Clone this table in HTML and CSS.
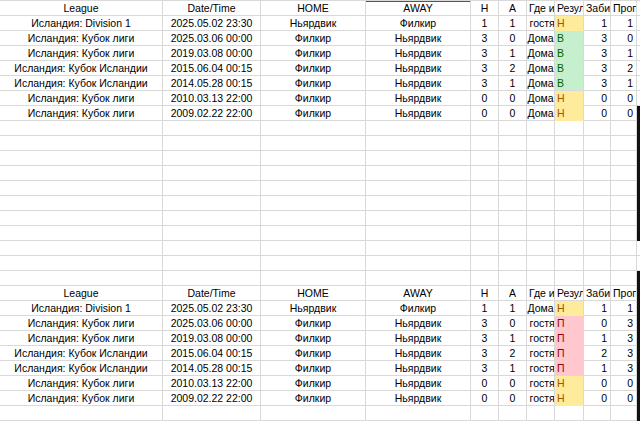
FILE: index.html
```html
<!DOCTYPE html>
<html lang="ru">
<head>
<meta charset="utf-8">
<title>Sheet</title>
<link rel="stylesheet" href="styles.css">
</head>
<body>
<div class="sheet">
  <div class="row hdr"><i class="c"><b>League</b></i><i class="c"><b>Date/Time</b></i><i class="c"><b>HOME</b></i><i class="c sel"><b>AWAY</b></i><i class="c"><b>Н</b></i><i class="c"><b>А</b></i><i class="l"><b>Где играли</b></i><i class="l"><b>Результат</b></i><i class="l"><b>Забито</b></i><i class="l"><b>Пропущено</b></i><i class="e"></i></div>
  <div class="row"><i class="c"><b>Исландия: Division 1</b></i><i class="c"><b>2025.05.02 23:30</b></i><i class="c"><b>Ньярдвик</b></i><i class="c"><b>Филкир</b></i><i class="c"><b>1</b></i><i class="c"><b>1</b></i><i class="c"><b>в гостях</b></i><i class="l draw"><b>Н</b></i><i class="r"><b>1</b></i><i class="r"><b>1</b></i><i class="e"></i></div>
  <div class="row"><i class="c"><b>Исландия: Кубок лиги</b></i><i class="c"><b>2025.03.06 00:00</b></i><i class="c"><b>Филкир</b></i><i class="c"><b>Ньярдвик</b></i><i class="c"><b>3</b></i><i class="c"><b>0</b></i><i class="c"><b>Дома</b></i><i class="l win"><b>В</b></i><i class="r"><b>3</b></i><i class="r"><b>0</b></i><i class="e"></i></div>
  <div class="row"><i class="c"><b>Исландия: Кубок лиги</b></i><i class="c"><b>2019.03.08 00:00</b></i><i class="c"><b>Филкир</b></i><i class="c"><b>Ньярдвик</b></i><i class="c"><b>3</b></i><i class="c"><b>1</b></i><i class="c"><b>Дома</b></i><i class="l win"><b>В</b></i><i class="r"><b>3</b></i><i class="r"><b>1</b></i><i class="e"></i></div>
  <div class="row"><i class="c"><b>Исландия: Кубок Исландии</b></i><i class="c"><b>2015.06.04 00:15</b></i><i class="c"><b>Филкир</b></i><i class="c"><b>Ньярдвик</b></i><i class="c"><b>3</b></i><i class="c"><b>2</b></i><i class="c"><b>Дома</b></i><i class="l win"><b>В</b></i><i class="r"><b>3</b></i><i class="r"><b>2</b></i><i class="e"></i></div>
  <div class="row"><i class="c"><b>Исландия: Кубок Исландии</b></i><i class="c"><b>2014.05.28 00:15</b></i><i class="c"><b>Филкир</b></i><i class="c"><b>Ньярдвик</b></i><i class="c"><b>3</b></i><i class="c"><b>1</b></i><i class="c"><b>Дома</b></i><i class="l win last"><b>В</b></i><i class="r"><b>3</b></i><i class="r"><b>1</b></i><i class="e"></i></div>
  <div class="row"><i class="c"><b>Исландия: Кубок лиги</b></i><i class="c"><b>2010.03.13 22:00</b></i><i class="c"><b>Филкир</b></i><i class="c"><b>Ньярдвик</b></i><i class="c"><b>0</b></i><i class="c"><b>0</b></i><i class="c"><b>Дома</b></i><i class="l draw"><b>Н</b></i><i class="r"><b>0</b></i><i class="r"><b>0</b></i><i class="e"></i></div>
  <div class="row"><i class="c"><b>Исландия: Кубок лиги</b></i><i class="c"><b>2009.02.22 22:00</b></i><i class="c"><b>Филкир</b></i><i class="c"><b>Ньярдвик</b></i><i class="c"><b>0</b></i><i class="c"><b>0</b></i><i class="c"><b>Дома</b></i><i class="l draw"><b>Н</b></i><i class="r"><b>0</b></i><i class="r"><b>0</b></i><i class="e dark"></i></div>
  <div class="row"><i></i><i></i><i></i><i></i><i></i><i></i><i></i><i></i><i></i><i></i><i class="e dark"></i></div>
  <div class="row"><i></i><i></i><i></i><i></i><i></i><i></i><i></i><i></i><i></i><i></i><i class="e dark"></i></div>
  <div class="row"><i></i><i></i><i></i><i></i><i></i><i></i><i></i><i></i><i></i><i></i><i class="e dark"></i></div>
  <div class="row"><i></i><i></i><i></i><i></i><i></i><i></i><i></i><i></i><i></i><i></i><i class="e dark"></i></div>
  <div class="row"><i></i><i></i><i></i><i></i><i></i><i></i><i></i><i></i><i></i><i></i><i class="e dark"></i></div>
  <div class="row"><i></i><i></i><i></i><i></i><i></i><i></i><i></i><i></i><i></i><i></i><i class="e dark"></i></div>
  <div class="row"><i></i><i></i><i></i><i></i><i></i><i></i><i></i><i></i><i></i><i></i><i class="e dark"></i></div>
  <div class="row"><i></i><i></i><i></i><i></i><i></i><i></i><i></i><i></i><i></i><i></i><i class="e dark"></i></div>
  <div class="row"><i></i><i></i><i></i><i></i><i></i><i></i><i></i><i></i><i></i><i></i><i class="e"></i></div>
  <div class="row"><i></i><i></i><i></i><i></i><i></i><i></i><i></i><i></i><i></i><i></i><i class="e"></i></div>
  <div class="row"><i></i><i></i><i></i><i></i><i></i><i></i><i></i><i></i><i></i><i></i><i class="e dark"></i></div>
  <div class="row hdr"><i class="c"><b>League</b></i><i class="c"><b>Date/Time</b></i><i class="c"><b>HOME</b></i><i class="c"><b>AWAY</b></i><i class="c"><b>Н</b></i><i class="c"><b>А</b></i><i class="l"><b>Где играли</b></i><i class="l"><b>Результат</b></i><i class="l"><b>Забито</b></i><i class="l"><b>Пропущено</b></i><i class="e dark"></i></div>
  <div class="row"><i class="c"><b>Исландия: Division 1</b></i><i class="c"><b>2025.05.02 23:30</b></i><i class="c"><b>Ньярдвик</b></i><i class="c"><b>Филкир</b></i><i class="c"><b>1</b></i><i class="c"><b>1</b></i><i class="c"><b>Дома</b></i><i class="l draw"><b>Н</b></i><i class="r"><b>1</b></i><i class="r"><b>1</b></i><i class="e dark"></i></div>
  <div class="row"><i class="c"><b>Исландия: Кубок лиги</b></i><i class="c"><b>2025.03.06 00:00</b></i><i class="c"><b>Филкир</b></i><i class="c"><b>Ньярдвик</b></i><i class="c"><b>3</b></i><i class="c"><b>0</b></i><i class="c"><b>в гостях</b></i><i class="l loss"><b>П</b></i><i class="r"><b>0</b></i><i class="r"><b>3</b></i><i class="e dark"></i></div>
  <div class="row"><i class="c"><b>Исландия: Кубок лиги</b></i><i class="c"><b>2019.03.08 00:00</b></i><i class="c"><b>Филкир</b></i><i class="c"><b>Ньярдвик</b></i><i class="c"><b>3</b></i><i class="c"><b>1</b></i><i class="c"><b>в гостях</b></i><i class="l loss"><b>П</b></i><i class="r"><b>1</b></i><i class="r"><b>3</b></i><i class="e dark"></i></div>
  <div class="row"><i class="c"><b>Исландия: Кубок Исландии</b></i><i class="c"><b>2015.06.04 00:15</b></i><i class="c"><b>Филкир</b></i><i class="c"><b>Ньярдвик</b></i><i class="c"><b>3</b></i><i class="c"><b>2</b></i><i class="c"><b>в гостях</b></i><i class="l loss"><b>П</b></i><i class="r"><b>2</b></i><i class="r"><b>3</b></i><i class="e dark"></i></div>
  <div class="row"><i class="c"><b>Исландия: Кубок Исландии</b></i><i class="c"><b>2014.05.28 00:15</b></i><i class="c"><b>Филкир</b></i><i class="c"><b>Ньярдвик</b></i><i class="c"><b>3</b></i><i class="c"><b>1</b></i><i class="c"><b>в гостях</b></i><i class="l loss last"><b>П</b></i><i class="r"><b>1</b></i><i class="r"><b>3</b></i><i class="e dark"></i></div>
  <div class="row"><i class="c"><b>Исландия: Кубок лиги</b></i><i class="c"><b>2010.03.13 22:00</b></i><i class="c"><b>Филкир</b></i><i class="c"><b>Ньярдвик</b></i><i class="c"><b>0</b></i><i class="c"><b>0</b></i><i class="c"><b>в гостях</b></i><i class="l draw"><b>Н</b></i><i class="r"><b>0</b></i><i class="r"><b>0</b></i><i class="e dark"></i></div>
  <div class="row"><i class="c"><b>Исландия: Кубок лиги</b></i><i class="c"><b>2009.02.22 22:00</b></i><i class="c"><b>Филкир</b></i><i class="c"><b>Ньярдвик</b></i><i class="c"><b>0</b></i><i class="c"><b>0</b></i><i class="c"><b>в гостях</b></i><i class="l draw"><b>Н</b></i><i class="r"><b>0</b></i><i class="r"><b>0</b></i><i class="e dark"></i></div>
  <div class="row"><i></i><i></i><i></i><i></i><i></i><i></i><i></i><i></i><i></i><i></i><i class="e dark"></i></div>
  <div class="row"><i></i><i></i><i></i><i></i><i></i><i></i><i></i><i></i><i></i><i></i><i class="e dark"></i></div>
</div>
</body>
</html>
```
FILE: styles.css
```css
html, body {
  margin: 0;
  padding: 0;
  background: #ffffff;
  overflow: hidden;
}
.sheet {
  width: 640px;
  height: 421px;
  overflow: hidden;
  border-top: 1px solid #d9d9d9;
  font-family: "Liberation Sans", Arial, sans-serif;
  font-size: 10.5px;
  color: #000;
}
.row {
  display: grid;
  grid-template-columns: 163px 98px 105px 105px 28px 28px 28px 29px 27px 26px 3px;
  height: 15px;
}
.row i {
  font-style: normal;
  display: flex;
  align-items: flex-end;
  box-sizing: border-box;
  height: 15px;
  border-right: 1px solid #d9d9d9;
  border-bottom: 1px solid #d9d9d9;
  overflow: hidden;
  white-space: nowrap;
  line-height: 13px;
  padding-bottom: 0;
}
.row i b {
  font-weight: normal;
  flex: none;
}
.row i.c { justify-content: center; }
.row i.l { justify-content: flex-start; padding-left: 2px; }
.row i.r { justify-content: flex-end; padding-right: 3px; }
.row i.e { border-right: none; }
.row i.dark { background: #111; border-bottom-color: #111; }
.row i.sel { border-top: 2px solid #217346; margin-top: -1px; height: 16px; }
.row i.draw { background: #ffeb9c; color: #9c5700; border-bottom-color: #ffeb9c; }
.row i.win { background: #c6efce; color: #006100; border-bottom-color: #c6efce; }
.row i.loss { background: #ffc7ce; color: #9c0006; border-bottom-color: #ffc7ce; }
.row i.last { border-bottom-color: #d9d9d9; }
```
